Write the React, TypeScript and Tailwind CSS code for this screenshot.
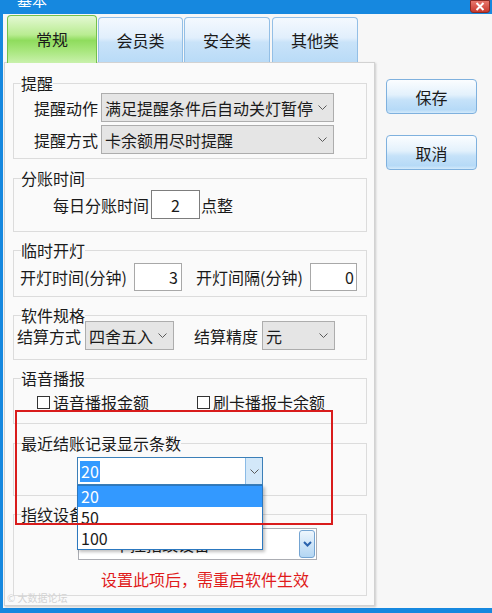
import React from "react";

function Chevron() {
  return (
    <svg width="9" height="5" viewBox="0 0 9 5">
      <path d="M0.5 0.5 L4.5 4.5 L8.5 0.5" fill="none" stroke="#5a5a5a" strokeWidth="1" />
    </svg>
  );
}

function Select({ text, className }: { text: string; className: string }) {
  return (
    <div className={"h-[29px] flex items-center bg-[#e5e5e5] border border-[#adadad] pl-[3px] " + className}>
      <span className="leading-[20px] whitespace-nowrap">{text}</span>
      <span className="ml-auto mr-[6px] flex items-center">
        <Chevron />
      </span>
    </div>
  );
}

function Group({ title, className, children }: { title: string; className: string; children: React.ReactNode }) {
  return (
    <fieldset className={"border border-[#dcdcdc] p-0 m-0 min-w-0 " + className}>
      <legend className="ml-[7px] p-0 text-[16px] leading-[16px] text-[#1a1a1a]">{title}</legend>
      {children}
    </fieldset>
  );
}

export default function App() {
  return (
    <div className="w-[492px] h-[613px] bg-[#1688df] flex flex-col overflow-hidden font-['Noto_Sans_CJK_SC','Noto_Sans',sans-serif] text-[16px] text-[#1a1a1a]">
      {/* title bar */}
      <div className="h-[14px] shrink-0 flex overflow-hidden">
        <span className="ml-[17px] -mt-[8px] text-white text-[15px] leading-[16px]">基本</span>
        <div className="ml-auto mr-[2px] w-[20px] h-[13px] rounded-b-[3px] border border-[#8c2a22] bg-[linear-gradient(to_bottom,#e8776c,#c9392e)] flex items-center justify-center">
          <svg width="10" height="9" viewBox="0 0 10 9">
            <path d="M1.5 1 L8.5 8 M8.5 1 L1.5 8" stroke="#ffffff" strokeWidth="2" fill="none" />
          </svg>
        </div>
      </div>

      {/* body */}
      <div className="flex-1 ml-[3px] mb-[5px] bg-[#f7f7f7] flex relative">
        {/* left column */}
        <div className="w-[372px] shrink-0 flex flex-col">
          {/* tabs */}
          <div className="h-[48px] shrink-0 flex items-end pl-[4px] relative z-10">
            <div className="w-[90px] h-[48px] -mb-[1px] rounded-t-[4px] border border-b-0 border-[#72c24c] bg-[linear-gradient(to_bottom,#e4f8d3_0%,#b9ec91_40%,#8fdc5d_52%,#a9e77f_75%,#c9f1ac_100%)] flex items-center justify-center pb-[2px]">
              <span className="leading-[20px]">常规</span>
            </div>
            <div className="ml-[1px] w-[85px] h-[45px] rounded-t-[4px] border border-b-0 border-[#93bfe6] bg-[linear-gradient(to_bottom,#f4f9fe_0%,#e1effc_45%,#c9e3f9_55%,#b9dbf7_100%)] flex items-center justify-center">
              <span className="leading-[20px]">会员类</span>
            </div>
            <div className="ml-[1px] w-[86px] h-[45px] rounded-t-[4px] border border-b-0 border-[#93bfe6] bg-[linear-gradient(to_bottom,#f4f9fe_0%,#e1effc_45%,#c9e3f9_55%,#b9dbf7_100%)] flex items-center justify-center">
              <span className="leading-[20px]">安全类</span>
            </div>
            <div className="ml-[2px] w-[86px] h-[45px] rounded-t-[4px] border border-b-0 border-[#93bfe6] bg-[linear-gradient(to_bottom,#f4f9fe_0%,#e1effc_45%,#c9e3f9_55%,#b9dbf7_100%)] flex items-center justify-center">
              <span className="leading-[20px]">其他类</span>
            </div>
          </div>

          {/* panel */}
          <div className="ml-[1px] w-[371px] flex-1 mb-[2px] border border-[#d2d2d2] bg-[#fafafa] shadow-[1px_1px_2px_rgba(0,0,0,0.18)] pt-[12px] pl-[8px] pr-[7px] relative flex flex-col">
            <Group title="提醒" className="">
              <div className="mt-[2px] pl-[20px] pb-[4px] flex flex-col gap-[3px]">
                <div className="flex items-center">
                  <span className="w-[67px] leading-[20px]">提醒动作</span>
                  <Select text="满足提醒条件后自动关灯暂停" className="w-[233px]" />
                </div>
                <div className="flex items-center">
                  <span className="w-[67px] leading-[20px]">提醒方式</span>
                  <Select text="卡余额用尽时提醒" className="w-[233px]" />
                </div>
              </div>
            </Group>

            <Group title="分账时间" className="mt-[11px]">
              <div className="mt-[4px] pb-[12px] pl-[39px] flex items-center">
                <span className="w-[98px] leading-[20px]">每日分账时间</span>
                <div className="w-[49px] h-[29px] border border-[#7d7d7d] bg-white flex items-center justify-center">
                  <span className="leading-[20px]">2</span>
                </div>
                <span className="ml-[1px] leading-[20px]">点整</span>
              </div>
            </Group>

            <Group title="临时开灯" className="mt-[10px]">
              <div className="mt-[5px] pb-[5px] pl-[6px] flex items-center">
                <span className="w-[114px] leading-[20px] whitespace-nowrap">开灯时间(分钟)</span>
                <div className="w-[48px] h-[28px] border border-[#a8a8a8] bg-white flex items-center justify-end pr-[3px]">
                  <span className="leading-[20px]">3</span>
                </div>
                <span className="ml-[14px] w-[114px] leading-[20px] whitespace-nowrap">开灯间隔(分钟)</span>
                <div className="w-[47px] h-[28px] border border-[#a8a8a8] bg-white flex items-center justify-end pr-[2px]">
                  <span className="leading-[20px]">0</span>
                </div>
              </div>
            </Group>

            <Group title="软件规格" className="mt-[10px]">
              <div className="-mt-[2px] pb-[9px] pl-[3px] flex items-center">
                <span className="w-[68px] leading-[20px]">结算方式</span>
                <Select text="四舍五入" className="w-[89px]" />
                <span className="ml-[20px] w-[68px] leading-[20px]">结算精度</span>
                <Select text="元" className="w-[73px]" />
              </div>
            </Group>

            <Group title="语音播报" className="mt-[10px]">
              <div className="mt-[6px] pb-[11px] pl-[23px] flex items-start">
                <div className="w-[160px] h-[20px] flex items-center">
                  <span className="w-[13px] h-[13px] border border-[#333333] bg-white shrink-0" />
                  <span className="ml-[3px] leading-[20px] whitespace-nowrap">语音播报金额</span>
                </div>
                <div className="h-[20px] flex items-center">
                  <span className="w-[13px] h-[13px] border border-[#333333] bg-white shrink-0" />
                  <span className="ml-[3px] leading-[20px] whitespace-nowrap">刷卡播报卡余额</span>
                </div>
              </div>
            </Group>

            <Group title="最近结账记录显示条数" className="mt-[11px]">
              <div className="mt-[6px] pb-[10px] pl-[63px]">
                <div className="relative w-[186px] h-[28px] border border-[#3b7fb8] bg-white flex items-center">
                  <span className="ml-[2px] px-[1px] bg-[#3399ff] text-white leading-[21px]">20</span>
                  <div className="ml-auto h-full w-[17px] bg-[#d3e8f9] border-l border-[#8bbbe6] flex items-center justify-center">
                    <Chevron />
                  </div>
                  <div className="absolute left-[-1px] top-[27px] w-[186px] border border-[#2c78bf] bg-white z-20 shadow-[2px_2px_3px_rgba(0,0,0,0.25)]">
                    <div className="h-[21px] bg-[#3399ff] text-white pl-[3px] leading-[21px]">20</div>
                    <div className="h-[21px] pl-[3px] leading-[21px]">50</div>
                    <div className="h-[21px] pl-[3px] leading-[21px]">100</div>
                  </div>
                </div>
              </div>
            </Group>

            <Group title="指纹设备" className="mt-[10px]">
              <div className="mt-[6px] pl-[64px]">
                <div className="w-[239px] h-[32px] border border-[#abadb3] bg-white flex items-center">
                  <span className="pl-[35px] leading-[20px]">中控指纹设备</span>
                  <div className="ml-auto mr-[1px] w-[16px] h-[28px] rounded-[3px] border border-[#74a4d2] bg-[linear-gradient(to_bottom,#eef6fd,#cfe5f8_50%,#b3d6f3)] flex items-center justify-center">
                    <svg width="9" height="6" viewBox="0 0 9 6">
                      <path d="M1 1 L4.5 4.5 L8 1" fill="none" stroke="#2a62ad" strokeWidth="2" />
                    </svg>
                  </div>
                </div>
              </div>
              <div className="mt-[7px] pb-[4px] pl-[87px]">
                <span className="leading-[20px] text-[#e01b1b] whitespace-nowrap">设置此项后，需重启软件生效</span>
              </div>
            </Group>

            {/* red annotation box */}
            <div className="absolute left-[10px] top-[347px] w-[318px] h-[115px] border-2 border-[#d91c1c] z-30 pointer-events-none" />
          </div>
        </div>

        {/* right column */}
        <div className="ml-[11px] mt-[65px] flex flex-col gap-[21px]">
          <div className="w-[91px] h-[35px] rounded-[4px] border border-[#7fb1de] bg-[linear-gradient(to_bottom,#fbfdff_0%,#e3f1fc_45%,#c6e2f9_60%,#b6daf7_90%,#d4eafb_100%)] flex items-center justify-center">
            <span className="leading-[20px]">保存</span>
          </div>
          <div className="w-[91px] h-[35px] rounded-[4px] border border-[#7fb1de] bg-[linear-gradient(to_bottom,#fbfdff_0%,#e3f1fc_45%,#c6e2f9_60%,#b6daf7_90%,#d4eafb_100%)] flex items-center justify-center">
            <span className="leading-[20px]">取消</span>
          </div>
        </div>

        {/* faint watermark */}
        <span className="absolute left-[4px] bottom-[4px] text-[10px] leading-[12px] text-[#d2d2d2] z-30">© 大数据论坛</span>
      </div>
    </div>
  );
}
